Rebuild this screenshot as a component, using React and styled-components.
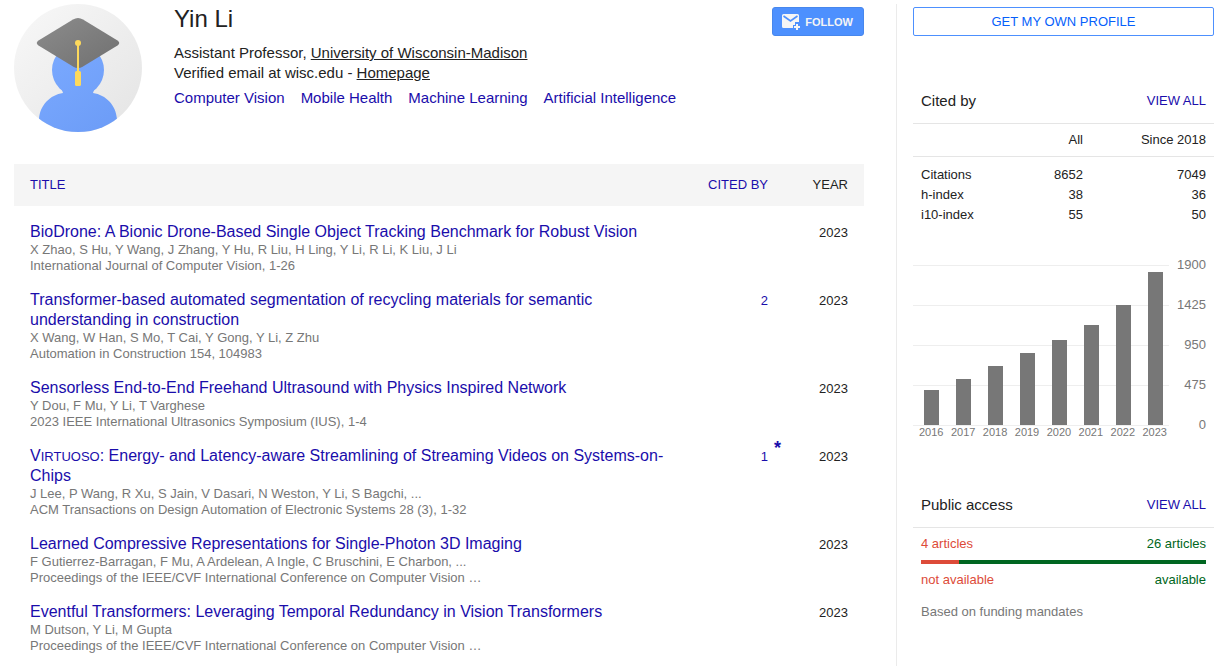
import React from 'react';
import styled, { createGlobalStyle } from 'styled-components';

const BLUE = '#1a0dab';
const TEXT = '#222';
const GRAY = '#777';
const LINE = '#e5e5e5';
const RED = '#dd4b39';
const GREEN = '#006621';

const AXIS_MAX = 1900;

const GlobalStyle = createGlobalStyle`
  * {
    box-sizing: border-box;
  }

  html {
    overflow: hidden;
  }

  body {
    margin: 0;
    background: #fff;
    color: ${TEXT};
    font-family: "Liberation Sans", Arial, sans-serif;
    font-size: 13px;
    line-height: 20px;
  }
`;

const Page = styled.div`
  display: flex;
  padding: 4px 13px 0 14px;
`;

const Main = styled.main`
  flex: 1;
  min-width: 0;
  margin-right: 32px;
`;

const Sidebar = styled.aside`
  flex: none;
  width: 318px;
  min-height: calc(100vh - 4px);
  padding: 3px 0 0 16px;
  border-left: 1px solid #ebebeb;
`;

const Link = styled.a`
  color: ${BLUE};
  text-decoration: none;

  &:hover {
    text-decoration: underline;
  }
`;

const Profile = styled.header`
  display: flex;
  align-items: flex-start;
  height: 160px;
`;

const Photo = styled.svg`
  flex: none;
  width: 128px;
  height: 128px;
  margin-right: 32px;
`;

const Info = styled.div`
  flex: 1;
  font-size: 15px;
`;

const Name = styled.h1`
  margin: 0 0 9px;
  font-size: 24px;
  font-weight: 400;
  line-height: 30px;
`;

const Line = styled.p`
  margin: 0;
`;

const InfoLink = styled.a`
  color: ${TEXT};
  text-decoration: underline;
`;

const Interests = styled.div`
  display: flex;
  flex-wrap: wrap;
  gap: 16px;
  margin-top: 5px;
`;

const FollowButton = styled.button`
  display: flex;
  align-items: center;
  gap: 4px;
  height: 29px;
  margin-top: 3px;
  padding: 0 10px 0 8px;
  border: 1px solid #4787ed;
  border-radius: 3px;
  background: #4d90fe;
  color: #f5f5f5;
  font-family: inherit;
  font-size: 11px;
  font-weight: 700;
  cursor: pointer;
`;

const ProfileButton = styled.button`
  display: block;
  width: 100%;
  height: 29px;
  padding: 0;
  border: 1px solid #4d90fe;
  border-radius: 2px;
  background: #fff;
  color: #065ffb;
  font-family: inherit;
  font-size: 13px;
  cursor: pointer;
`;

const Articles = styled.table`
  width: 100%;
  border-collapse: collapse;
`;

const HeadCell = styled.th`
  height: 42px;
  padding: 0 16px;
  background: #f5f5f5;
  font-weight: 400;
  text-align: ${({ $align }) => $align || 'left'};
  width: ${({ $width }) => $width || 'auto'};
`;

const Cell = styled.td`
  padding: 16px 16px 0;
  vertical-align: baseline;
  text-align: ${({ $align }) => $align || 'left'};
`;

const Title = styled(Link)`
  display: block;
  font-size: 16px;
`;

const SmallCaps = styled.span`
  font-size: 13px;
  line-height: 16px;
`;

const Detail = styled.div`
  color: ${GRAY};
  line-height: 16px;
`;

const Cited = styled.span`
  position: relative;
`;

const Star = styled.a`
  position: absolute;
  left: 100%;
  bottom: 6px;
  padding-left: 6px;
  color: ${BLUE};
  font-size: 18px;
  font-weight: 700;
  text-decoration: none;
`;

const PanelHead = styled.div`
  display: flex;
  align-items: center;
  justify-content: space-between;
  padding: 0 8px 12px;
  border-bottom: 1px solid ${LINE};
`;

const PanelTitle = styled.h2`
  margin: 0;
  font-size: 15px;
  font-weight: 400;
`;

const CitedPanel = styled.section`
  margin-top: 55px;
`;

const Stats = styled.table`
  width: 100%;
  border-collapse: collapse;

  th {
    font-weight: 400;
    text-align: left;
  }

  th,
  td {
    padding: 0 8px;
  }

  th + th,
  td {
    text-align: right;
  }

  thead th {
    padding: 6px 8px;
    border-bottom: 1px solid ${LINE};
  }

  thead th:last-child {
    width: 123px;
  }

  tbody tr:first-child > * {
    padding-top: 8px;
  }
`;

const Chart = styled.div`
  display: grid;
  grid-template-columns: 1fr 37px;
  margin: 40px 8px 0 0;
  color: ${GRAY};
`;

const Plot = styled.div`
  display: flex;
  justify-content: space-between;
  align-items: flex-end;
  height: 161px;
  padding: 0 6px 0 11px;
  border-bottom: 1px solid #eee;
  background: repeating-linear-gradient(#eee 0 1px, #fff 1px 40px);
`;

const Bar = styled.div`
  width: 15px;
  background: ${GRAY};
`;

const Axis = styled.div`
  display: flex;
  flex-direction: column;
  justify-content: space-between;
  height: 180px;
  margin-top: -10px;
  text-align: right;
`;

const Years = styled.div`
  display: flex;
  justify-content: space-between;
  margin-top: -10px;
  padding: 0 2px 0 6px;
  font-size: 11px;
  line-height: 14px;
`;

const AccessPanel = styled.section`
  margin-top: 56px;
`;

const AccessBody = styled.div`
  padding: 6px 8px 0;
`;

const Split = styled.div`
  display: flex;
  justify-content: space-between;
`;

const Unavailable = styled.span`
  color: ${RED};
`;

const Available = styled.span`
  color: ${GREEN};
`;

const Meter = styled.div`
  display: flex;
  height: 4px;
  margin: 6px 0;
  background: ${GREEN};
`;

const MeterPart = styled.div`
  background: ${RED};
`;

const Note = styled.p`
  margin: 12px 0 0;
  color: ${GRAY};
`;

const interests = ['Computer Vision', 'Mobile Health', 'Machine Learning', 'Artificial Intelligence'];

const articles = [
  {
    title: 'BioDrone: A Bionic Drone-Based Single Object Tracking Benchmark for Robust Vision',
    authors: 'X Zhao, S Hu, Y Wang, J Zhang, Y Hu, R Liu, H Ling, Y Li, R Li, K Liu, J Li',
    venue: 'International Journal of Computer Vision, 1-26',
    year: 2023,
  },
  {
    title: 'Transformer-based automated segmentation of recycling materials for semantic understanding in construction',
    authors: 'X Wang, W Han, S Mo, T Cai, Y Gong, Y Li, Z Zhu',
    venue: 'Automation in Construction 154, 104983',
    cited: 2,
    year: 2023,
  },
  {
    title: 'Sensorless End-to-End Freehand Ultrasound with Physics Inspired Network',
    authors: 'Y Dou, F Mu, Y Li, T Varghese',
    venue: '2023 IEEE International Ultrasonics Symposium (IUS), 1-4',
    year: 2023,
  },
  {
    id: 'virtuoso',
    title: (
      <>
        V<SmallCaps>IRTUOSO</SmallCaps>: Energy- and Latency-aware Streamlining of Streaming Videos on
        Systems-on-Chips
      </>
    ),
    authors: 'J Lee, P Wang, R Xu, S Jain, V Dasari, N Weston, Y Li, S Bagchi, ...',
    venue: 'ACM Transactions on Design Automation of Electronic Systems 28 (3), 1-32',
    cited: 1,
    merged: true,
    year: 2023,
  },
  {
    title: 'Learned Compressive Representations for Single-Photon 3D Imaging',
    authors: 'F Gutierrez-Barragan, F Mu, A Ardelean, A Ingle, C Bruschini, E Charbon, ...',
    venue: 'Proceedings of the IEEE/CVF International Conference on Computer Vision …',
    year: 2023,
  },
  {
    title: 'Eventful Transformers: Leveraging Temporal Redundancy in Vision Transformers',
    authors: 'M Dutson, Y Li, M Gupta',
    venue: 'Proceedings of the IEEE/CVF International Conference on Computer Vision …',
    year: 2023,
  },
];

const stats = [
  { label: 'Citations', all: 8652, recent: 7049 },
  { label: 'h-index', all: 38, recent: 36 },
  { label: 'i10-index', all: 55, recent: 50 },
];

const perYear = [
  { year: 2016, count: 416 },
  { year: 2017, count: 547 },
  { year: 2018, count: 701 },
  { year: 2019, count: 855 },
  { year: 2020, count: 1010 },
  { year: 2021, count: 1188 },
  { year: 2022, count: 1425 },
  { year: 2023, count: 1817 },
];

const Avatar = () => (
  <Photo viewBox="0 0 128 128" role="img" aria-label="Yin Li">
    <defs>
      <linearGradient id="back" x1="0" y1="0" x2="1" y2="1">
        <stop offset="0" stopColor="#f8f8f8" />
        <stop offset="1" stopColor="#e4e4e4" />
      </linearGradient>
      <linearGradient id="body" gradientUnits="userSpaceOnUse" x1="30" y1="40" x2="100" y2="128">
        <stop offset="0" stopColor="#7baaff" />
        <stop offset="1" stopColor="#6c9cf7" />
      </linearGradient>
      <linearGradient id="cap" x1="0" y1="0" x2="1" y2="1">
        <stop offset="0" stopColor="#8c8c8c" />
        <stop offset="1" stopColor="#707070" />
      </linearGradient>
      <clipPath id="disc">
        <circle cx="64" cy="64" r="64" />
      </clipPath>
    </defs>
    <g clipPath="url(#disc)">
      <rect width="128" height="128" fill="url(#back)" />
      <circle cx="64" cy="66" r="26" fill="url(#body)" />
      <path
        d="M48 86l1 3c-13 2-23 12-24 26v13h78v-13c-1-14-11-24-24-26l1-3z"
        fill="url(#body)"
      />
      <path
        d="M59 15.500Q64 12.500 69 15.500L103.500 36.500Q107 39 103.500 41.500L69 62.500Q64 65.500 59 62.500L24.500 41.500Q21 39 24.500 36.500Z"
        fill="url(#cap)"
      />
      <circle cx="64" cy="39" r="3" fill="#fdd95c" />
      <rect x="63" y="39" width="2" height="30" fill="#fdd95c" />
      <rect x="61" y="67" width="6" height="15" rx="1.500" fill="#fdd95c" />
    </g>
  </Photo>
);

const MailIcon = () => (
  <svg width="20" height="19" viewBox="0 0 20 19" aria-hidden="true">
    <path
      d="M2.500 2h14A1.500 1.500 0 0 1 18 3.500V10h-4v3h-2v3H2.500A1.500 1.500 0 0 1 1 14.500v-11A1.500 1.500 0 0 1 2.500 2z"
      fill="#f5f5f5"
    />
    <path d="M2.500 4l7 5 7-5" fill="none" stroke="#4d90fe" strokeWidth="1.600" />
    <path d="M15 12h2v2h2v2h-2v2h-2v-2h-2v-2h2z" fill="#f5f5f5" />
  </svg>
);

const Article = ({ article }) => (
  <tr>
    <Cell>
      <Title href="#">{article.title}</Title>
      <Detail>{article.authors}</Detail>
      <Detail>{article.venue}</Detail>
    </Cell>
    <Cell $align="right">
      {article.cited && (
        <Cited>
          <Link href="#">{article.cited}</Link>
          {article.merged && <Star href="#">*</Star>}
        </Cited>
      )}
    </Cell>
    <Cell $align="right">{article.year}</Cell>
  </tr>
);

const App = () => (
  <>
    <GlobalStyle />
    <Page>
      <Main>
        <Profile>
          <Avatar />
          <Info>
            <Name>Yin Li</Name>
            <Line>
              Assistant Professor, <InfoLink href="#">University of Wisconsin-Madison</InfoLink>
            </Line>
            <Line>
              Verified email at wisc.edu - <InfoLink href="#">Homepage</InfoLink>
            </Line>
            <Interests>
              {interests.map((interest) => (
                <Link key={interest} href="#">{interest}</Link>
              ))}
            </Interests>
          </Info>
          <FollowButton type="button">
            <MailIcon />
            FOLLOW
          </FollowButton>
        </Profile>
        <Articles>
          <thead>
            <tr>
              <HeadCell><Link href="#">TITLE</Link></HeadCell>
              <HeadCell $align="right" $width="100px"><Link href="#">CITED BY</Link></HeadCell>
              <HeadCell $align="right" $width="80px">YEAR</HeadCell>
            </tr>
          </thead>
          <tbody>
            {articles.map((article) => (
              <Article key={article.id || article.title} article={article} />
            ))}
          </tbody>
        </Articles>
      </Main>
      <Sidebar>
        <ProfileButton type="button">GET MY OWN PROFILE</ProfileButton>
        <CitedPanel>
          <PanelHead>
            <PanelTitle>Cited by</PanelTitle>
            <Link href="#">VIEW ALL</Link>
          </PanelHead>
          <Stats>
            <thead>
              <tr>
                <th aria-label="Metric" />
                <th>All</th>
                <th>Since 2018</th>
              </tr>
            </thead>
            <tbody>
              {stats.map(({ label, all, recent }) => (
                <tr key={label}>
                  <th>{label}</th>
                  <td>{all}</td>
                  <td>{recent}</td>
                </tr>
              ))}
            </tbody>
          </Stats>
          <Chart>
            <Plot>
              {perYear.map(({ year, count }) => (
                <Bar key={year} style={{ height: `${(count / AXIS_MAX) * 100}%` }} />
              ))}
            </Plot>
            <Axis>
              {[1900, 1425, 950, 475, 0].map((tick) => (
                <span key={tick}>{tick}</span>
              ))}
            </Axis>
            <Years>
              {perYear.map(({ year }) => (
                <span key={year}>{year}</span>
              ))}
            </Years>
          </Chart>
        </CitedPanel>
        <AccessPanel>
          <PanelHead>
            <PanelTitle>Public access</PanelTitle>
            <Link href="#">VIEW ALL</Link>
          </PanelHead>
          <AccessBody>
            <Split>
              <Unavailable>4 articles</Unavailable>
              <Available>26 articles</Available>
            </Split>
            <Meter>
              <MeterPart style={{ width: `${(4 / 30) * 100}%` }} />
            </Meter>
            <Split>
              <Unavailable>not available</Unavailable>
              <Available>available</Available>
            </Split>
            <Note>Based on funding mandates</Note>
          </AccessBody>
        </AccessPanel>
      </Sidebar>
    </Page>
  </>
);

export default App;
